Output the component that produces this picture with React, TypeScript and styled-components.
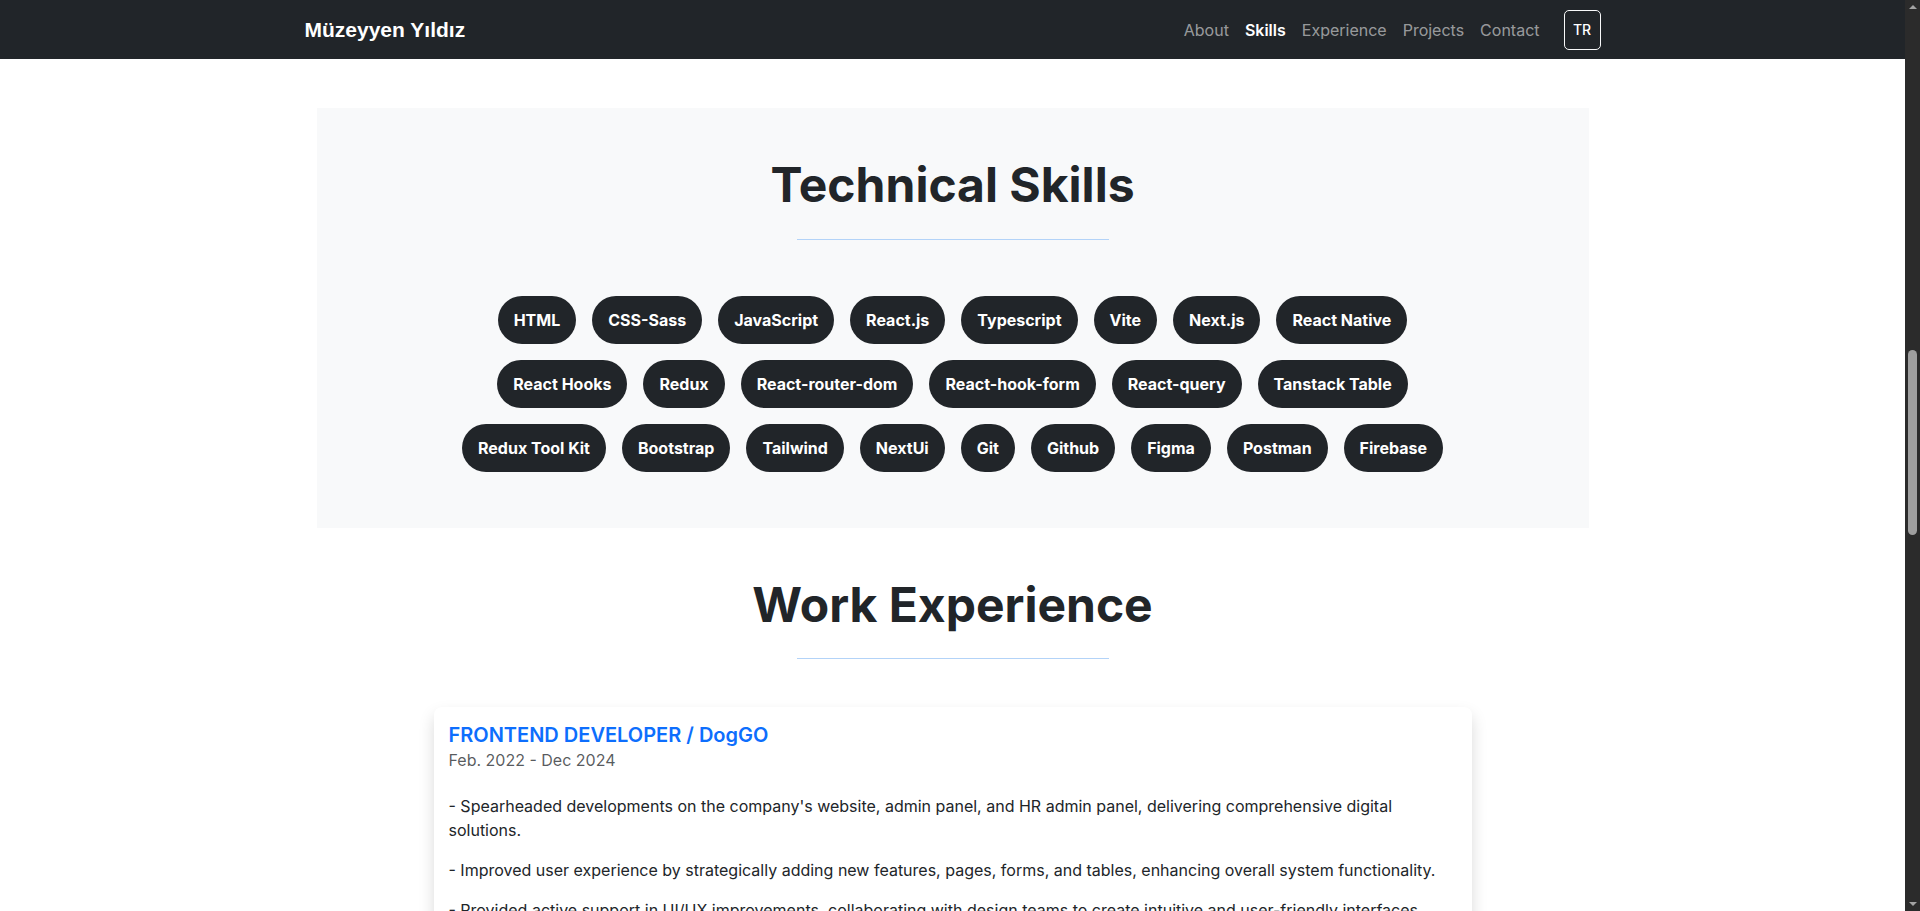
import React from "react";
import styled, { createGlobalStyle } from "styled-components";

const GlobalStyle = createGlobalStyle`
  * { box-sizing: border-box; }
  html {
    background: #2b2b2b;
  }
  body {
    margin: 0 15px 0 0;
    background: #ffffff;
    color: #212529;
    font-family: Inter, "Noto Sans", sans-serif;
    font-size: 16px;
    line-height: 1.5;
  }
`;

/* Imitation of the browser's dark scrollbar thumb and arrows, drawn over the gutter */
const ScrollThumb = styled.div`
  position: fixed;
  top: 350px;
  right: 3px;
  width: 9px;
  height: 185px;
  border-radius: 5px;
  background: #9f9f9f;
  z-index: 20;
`;

const ScrollArrow = styled.div<{ $down?: boolean }>`
  position: fixed;
  right: 3px;
  ${(p) => (p.$down ? "bottom: 5px;" : "top: 5px;")}
  width: 0;
  height: 0;
  border-left: 4.5px solid transparent;
  border-right: 4.5px solid transparent;
  ${(p) => (p.$down ? "border-top: 4px solid #a3a3a3;" : "border-bottom: 4px solid #a3a3a3;")}
  z-index: 20;
`;

const Navbar = styled.nav`
  position: sticky;
  top: 0;
  z-index: 10;
  height: 59px;
  background: #212529;
`;

const NavInner = styled.div`
  max-width: 1320px;
  height: 100%;
  margin: 0 auto;
  padding: 0 12px;
  display: flex;
  align-items: center;
  justify-content: space-between;
`;

const Brand = styled.a`
  font-family: "Liberation Sans", Arial, sans-serif;
  font-weight: 700;
  font-size: 21px;
  line-height: 30px;
  color: #ffffff;
  text-decoration: none;
`;

const NavList = styled.ul`
  display: flex;
  align-items: center;
  list-style: none;
  margin: 0;
  padding: 0;
`;

const NavLink = styled.a<{ $active?: boolean }>`
  display: block;
  padding: 8px;
  font-size: 16px;
  line-height: 24px;
  font-weight: ${(p) => (p.$active ? 600 : 400)};
  color: ${(p) => (p.$active ? "#ffffff" : "rgba(255, 255, 255, 0.55)")};
  text-decoration: none;
`;

const LangButton = styled.button`
  margin-left: 16px;
  width: 37px;
  height: 40px;
  padding: 0;
  border: 1px solid #f8f9fa;
  border-radius: 5px;
  background: transparent;
  color: #ffffff;
  font-family: Inter, sans-serif;
  font-size: 14px;
  font-weight: 500;
`;

const Main = styled.main`
  max-width: 1320px;
  margin: 0 auto;
  padding: 49px 12px 0;
`;

const SkillsSection = styled.section`
  max-width: 1272px;
  margin: 0 auto;
  padding: 48px 0;
  background: #f8f9fa;
  text-align: center;
`;

const ExperienceSection = styled.section`
  padding: 48px 0;
  text-align: center;
`;

const SectionTitle = styled.h2`
  margin: 0 0 25px;
  font-size: 48px;
  line-height: 1.2;
  font-weight: 700;
  color: #212529;
`;

const Divider = styled.hr`
  width: 312px;
  height: 0;
  margin: 0 auto 48px;
  border: 0;
  border-top: 1px solid #b3d3f8;
  opacity: 1;
`;

const PillWrap = styled.ul`
  max-width: 1036px;
  margin: 0 auto;
  padding: 8px;
  list-style: none;
  display: flex;
  flex-wrap: wrap;
  justify-content: center;
  gap: 16px;
`;

const Pill = styled.li`
  height: 48px;
  padding: 12px 16px;
  border-radius: 24px;
  background: #212529;
  color: #ffffff;
  font-size: 16px;
  line-height: 24px;
  font-weight: 700;
  white-space: nowrap;
`;

const Card = styled.article`
  max-width: 1038px;
  margin: 0 auto;
  padding: 16px 15px;
  background: #ffffff;
  border-radius: 8px;
  box-shadow: 0 8px 16px rgba(0, 0, 0, 0.15);
  text-align: left;
`;

const JobTitle = styled.h3`
  margin: 0 0 1px;
  font-size: 20px;
  line-height: 1.2;
  font-weight: 600;
  color: #0d6efd;
`;

const JobDate = styled.p`
  margin: 0 0 22px;
  font-size: 16px;
  color: rgba(33, 37, 41, 0.75);
`;

const JobItem = styled.p`
  margin: 0 0 16px;
  font-size: 16px;
  color: #212529;
`;

const skills = [
  "HTML",
  "CSS-Sass",
  "JavaScript",
  "React.js",
  "Typescript",
  "Vite",
  "Next.js",
  "React Native",
  "React Hooks",
  "Redux",
  "React-router-dom",
  "React-hook-form",
  "React-query",
  "Tanstack Table",
  "Redux Tool Kit",
  "Bootstrap",
  "Tailwind",
  "NextUi",
  "Git",
  "Github",
  "Figma",
  "Postman",
  "Firebase",
];

const navItems = ["About", "Skills", "Experience", "Projects", "Contact"];

const jobItems = [
  "- Spearheaded developments on the company's website, admin panel, and HR admin panel, delivering comprehensive digital solutions.",
  "- Improved user experience by strategically adding new features, pages, forms, and tables, enhancing overall system functionality.",
  "- Provided active support in UI/UX improvements, collaborating with design teams to create intuitive and user-friendly interfaces.",
];

export default function App() {
  return (
    <>
      <GlobalStyle />
      <Navbar>
        <NavInner>
          <Brand href="#">Müzeyyen Yıldız</Brand>
          <NavList>
            {navItems.map((item) => (
              <li key={item}>
                <NavLink href="#" $active={item === "Skills"}>
                  {item}
                </NavLink>
              </li>
            ))}
            <li>
              <LangButton type="button">TR</LangButton>
            </li>
          </NavList>
        </NavInner>
      </Navbar>
      <Main>
        <SkillsSection>
          <SectionTitle>Technical Skills</SectionTitle>
          <Divider />
          <PillWrap>
            {skills.map((s) => (
              <Pill key={s}>{s}</Pill>
            ))}
          </PillWrap>
        </SkillsSection>
        <ExperienceSection>
          <SectionTitle>Work Experience</SectionTitle>
          <Divider />
          <Card>
            <JobTitle>FRONTEND DEVELOPER / DogGO</JobTitle>
            <JobDate>Feb. 2022 - Dec 2024</JobDate>
            {jobItems.map((t) => (
              <JobItem key={t}>{t}</JobItem>
            ))}
          </Card>
        </ExperienceSection>
      </Main>
      <ScrollArrow aria-hidden />
      <ScrollThumb aria-hidden />
      <ScrollArrow aria-hidden $down />
    </>
  );
}
